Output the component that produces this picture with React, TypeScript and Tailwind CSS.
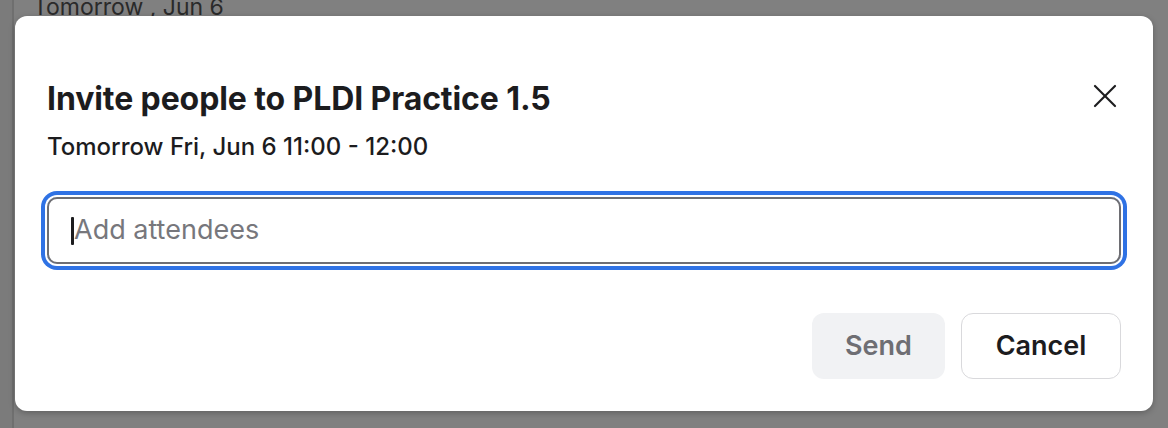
import React from 'react';

function CloseIcon() {
  return (
    <svg width="24" height="24" viewBox="0 0 24 24" fill="none" stroke="#1c1c1e" strokeWidth="2.2" strokeLinecap="round">
      <path d="M2 2 L22 22" />
      <path d="M22 2 L2 22" />
    </svg>
  );
}

export default function App() {
  return (
    <div className="relative w-[1168px] h-[428px] overflow-hidden font-['Inter',sans-serif] bg-[#808080]">
      {/* dimmed page behind the dialog */}
      <div className="flex h-full">
        <div className="w-[14px] h-full bg-[#7b7b7b] border-r-2 border-[#6f6f6f]" />
        <div className="flex-1 pl-[19px] -mt-[7px]">
          <p className="text-[23px] leading-[28px] text-[#2a2a2a]">Tomorrow , Jun 6</p>
        </div>
      </div>

      {/* dialog */}
      <div className="absolute left-[15px] top-[16px] w-[1138px] h-[395px] bg-white rounded-[12px] shadow-[0_2px_6px_rgba(0,0,0,0.25)] px-8 pt-[64px] pb-8 flex flex-col">
        <div className="flex items-center justify-between h-[38px]">
          <h2 className="text-[32px] leading-[38px] font-bold text-[#1c1c1e] tracking-[-0.1px]">
            Invite people to PLDI Practice 1.5
          </h2>
          <button className="w-[30px] h-[30px] flex items-center justify-center mr-[1px] -mt-[6px]">
            <CloseIcon />
          </button>
        </div>
        <p className="mt-[14px] text-[24px] leading-[30px] font-medium text-[#1c1c1e]">
          Tomorrow Fri, Jun 6 11:00 - 12:00
        </p>

        <div className="mt-[35px] h-[67px] rounded-[10px] border-2 border-[#6e6e73] shadow-[0_0_0_2px_#ffffff,0_0_0_6px_#2f72e4] flex items-center pl-[22px]">
          <span className="w-[3px] h-[28px] bg-[#1c1c1e] rounded-[1px]" />
          <span className="text-[27px] text-[#77777c]">Add attendees</span>
        </div>

        <div className="mt-auto flex justify-end gap-4">
          <button className="w-[133px] h-[66px] rounded-[12px] bg-[#f1f2f4] text-[27px] font-semibold text-[#6e6e73]">
            Send
          </button>
          <button className="w-[160px] h-[66px] rounded-[12px] border border-[#d9d9dc] bg-white text-[27px] font-semibold text-[#1c1c1e]">
            Cancel
          </button>
        </div>
      </div>
    </div>
  );
}
